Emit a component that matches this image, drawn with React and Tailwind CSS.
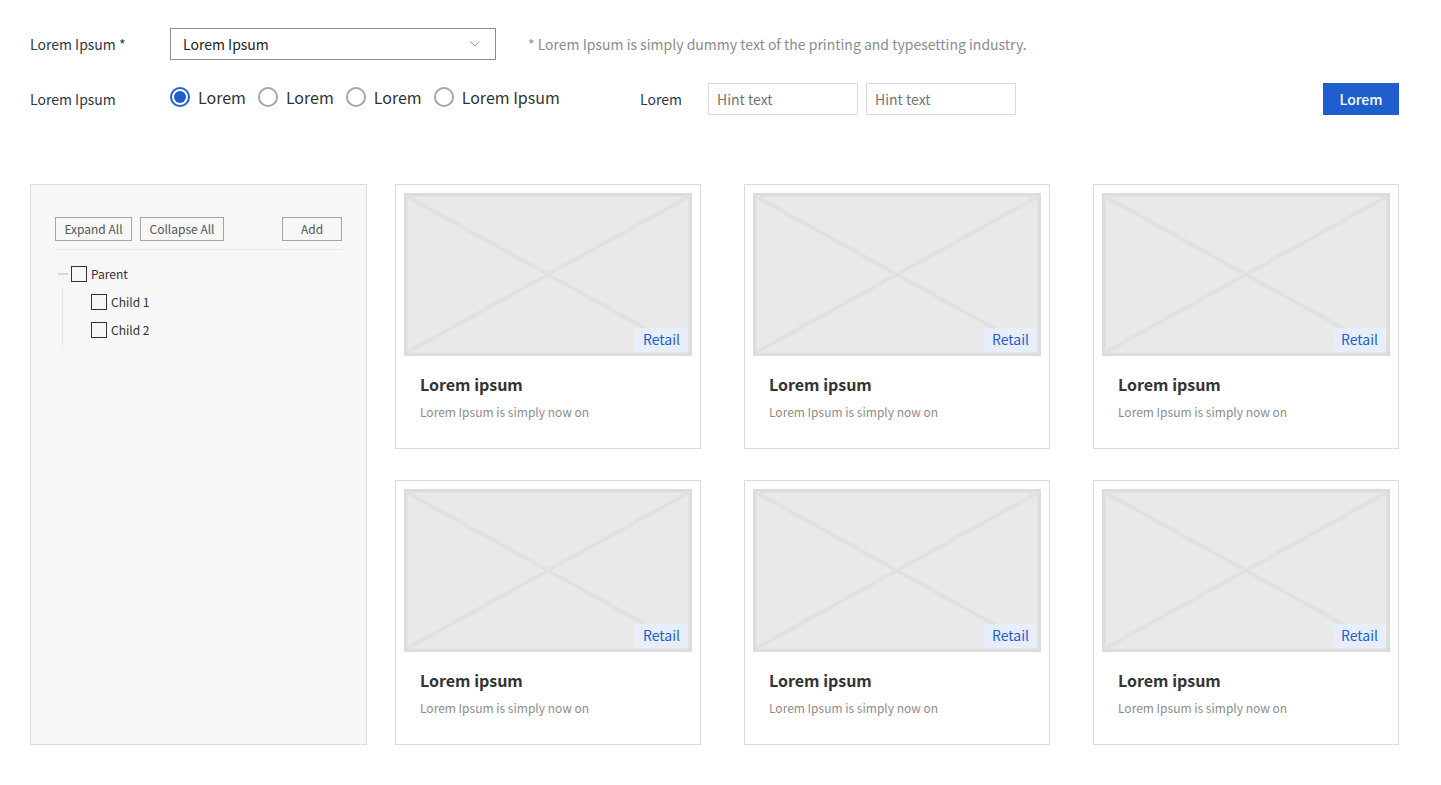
import { useState } from "react";

const RADIOS = ["Lorem", "Lorem", "Lorem", "Lorem Ipsum"];
const CARDS = [1, 2, 3, 4, 5, 6];

function RadioOption({ label, checked, onChange }) {
  return (
    <label className="flex items-center gap-2 text-base leading-7 text-[#333333]">
      <input
        type="radio"
        name="kind"
        checked={checked}
        onChange={onChange}
        className="size-5 appearance-none rounded-full border-2 border-[#a5a5a5] bg-white bg-clip-content p-0.5 checked:border-[#1f5fcd] checked:bg-[#1f5fcd]"
      />
      {label}
    </label>
  );
}

function TreeCheckbox({ label }) {
  return (
    <label className="flex h-7 items-center gap-1 text-xs text-[#333333]">
      <input
        type="checkbox"
        className="size-4 appearance-none border border-[#333333] checked:bg-[#333333]"
      />
      {label}
    </label>
  );
}

function SmallButton({ className = "", children }) {
  return (
    <button
      type="button"
      className={`h-6 border border-[#a3a3a3] text-xs text-[#555555] ${className}`}
    >
      {children}
    </button>
  );
}

function Placeholder() {
  return (
    <svg viewBox="0 0 288 163" className="block w-full" aria-hidden="true">
      <rect width="288" height="163" fill="#dcdcdc" />
      <rect x="3" y="3" width="282" height="157" fill="#e4e4e4" />
      <rect x="4" y="4" width="280" height="155" fill="#e9e9e9" />
      <path d="M4 4 284 159M284 4 4 159" stroke="#e5e5e5" strokeWidth="5" fill="none" />
      <path d="M4 4 284 159M284 4 4 159" stroke="#e0e0e0" strokeWidth="2.5" fill="none" />
    </svg>
  );
}

function Card() {
  return (
    <article className="border border-[#dbdbdb] bg-white p-2">
      <div className="relative">
        <Placeholder />
        <span className="absolute right-1 bottom-1 h-6 rounded-xs bg-[#e8eef9] px-2 text-sm leading-[22px] text-[#1f5fcd]">
          Retail
        </span>
      </div>
      <div className="px-4 pt-4 pb-[18px]">
        <h2 className="text-base leading-6 font-bold text-[#333333]">Lorem ipsum</h2>
        <p className="mt-1.5 text-xs leading-5 text-[#8c8c8c]">Lorem Ipsum is simply now on</p>
      </div>
    </article>
  );
}

export default function App() {
  const [selected, setSelected] = useState(0);
  return (
    <main className="bg-white pt-7 pr-[42px] pb-10 pl-[30px] font-['Noto_Sans_CJK_KR','Noto_Sans',sans-serif] text-sm text-[#2c3a47]">
      <form className="flex flex-col gap-[23px]" onSubmit={(e) => e.preventDefault()}>
        <div className="flex h-8 items-center">
          <label htmlFor="category" className="w-[140px] shrink-0">
            Lorem Ipsum *
          </label>
          <div className="relative w-[326px] shrink-0">
            <select
              id="category"
              className="block h-8 w-full appearance-none border border-[#8f8f8f] bg-white px-3 text-sm text-[#222222]"
            >
              <option>Lorem Ipsum</option>
            </select>
            <svg
              viewBox="0 0 10 6"
              className="pointer-events-none absolute top-[13px] right-4 h-1.5 w-2.5"
              fill="none"
              stroke="#9a9a9a"
              aria-hidden="true"
            >
              <path d="M.6.6 5 5 9.4.6" />
            </svg>
          </div>
          <p className="ml-8 text-[#8c8c8c]">
            * Lorem Ipsum is simply dummy text of the printing and typesetting industry.
          </p>
        </div>

        <div className="flex h-8 items-center">
          <span id="kind-label" className="w-[140px] shrink-0">
            Lorem Ipsum
          </span>
          <div
            role="radiogroup"
            aria-labelledby="kind-label"
            className="flex w-[470px] shrink-0 gap-3 self-start"
          >
            {RADIOS.map((label, i) => (
              <RadioOption
                key={i}
                label={label}
                checked={selected === i}
                onChange={() => setSelected(i)}
              />
            ))}
          </div>
          <label htmlFor="from" className="w-[68px] shrink-0">
            Lorem
          </label>
          <div className="flex gap-2">
            <input
              id="from"
              type="text"
              placeholder="Hint text"
              className="h-8 w-[150px] border border-[#dbdbdb] px-2 placeholder:text-[#757575]"
            />
            <input
              type="text"
              aria-label="Lorem"
              placeholder="Hint text"
              className="h-8 w-[150px] border border-[#dbdbdb] px-2 placeholder:text-[#757575]"
            />
          </div>
          <button
            type="submit"
            className="ml-auto h-8 w-[76px] bg-[#1f5fcd] font-medium text-white"
          >
            Lorem
          </button>
        </div>
      </form>

      <div className="mt-[69px] flex gap-7">
        <aside className="w-[337px] shrink-0 border border-[#dbdbdb] bg-[#f7f7f7] px-6 pt-8">
          <div className="flex gap-2 border-b border-[#e8e8e8] pb-2">
            <SmallButton className="w-[77px]">Expand All</SmallButton>
            <SmallButton className="w-[84px]">Collapse All</SmallButton>
            <SmallButton className="ml-auto w-[60px]">Add</SmallButton>
          </div>
          <ul className="mt-2.5">
            <li>
              <div className="flex items-center gap-[3px] pl-[3px]">
                <button type="button" aria-label="Collapse Parent" className="h-0.5 w-2.5 bg-[#d6d6d6]" />
                <TreeCheckbox label="Parent" />
              </div>
              <ul className="ml-[7px] border-l border-[#e8e8e8] pb-0.5 pl-7">
                <li>
                  <TreeCheckbox label="Child 1" />
                </li>
                <li>
                  <TreeCheckbox label="Child 2" />
                </li>
              </ul>
            </li>
          </ul>
        </aside>

        <section className="grid flex-1 grid-cols-3 gap-x-[43px] gap-y-[31px]">
          {CARDS.map((id) => (
            <Card key={id} />
          ))}
        </section>
      </div>
    </main>
  );
}
